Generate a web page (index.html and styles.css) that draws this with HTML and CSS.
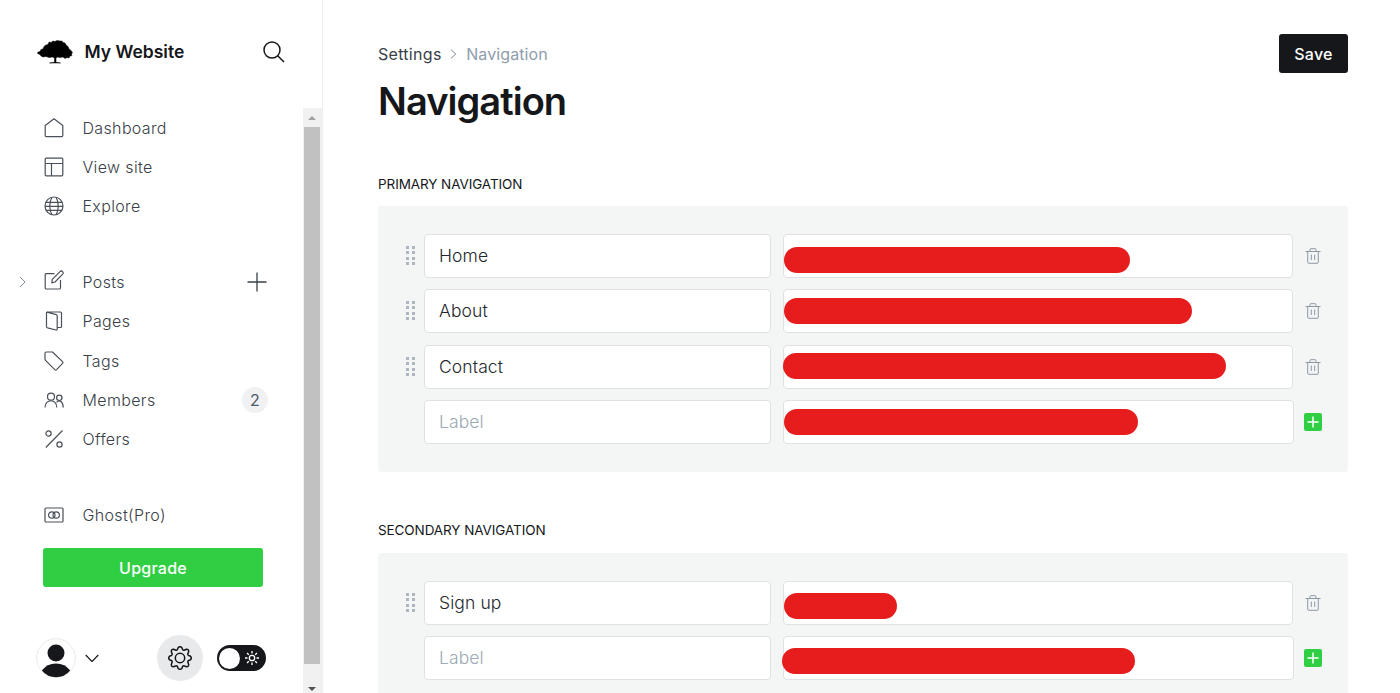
FILE: index.html
```html
<!DOCTYPE html>
<html lang="en">
<head>
    <meta charset="UTF-8">
    <meta name="viewport" content="width=device-width, initial-scale=1.0">
    <title>Settings - Navigation</title>
    <link rel="stylesheet" href="styles.css">
</head>
<body>
    <div class="app">
        <aside class="sidebar">
            <header class="sidebar-header">
                <svg class="logo" viewBox="0 0 36 26">
                    <path d="M0.500 14.500 L1 13 L3 12.500 L4 10.500 L6 10 L7 7.500 L9 6 L11 5.500 L12 3 L14 3.500 L16 2 L18 2.500 L20 1.500 L23 2 L25 2 L26 3.500 L28 4 L29 6 L31 7.500 L32 10 L34 11.500 L35.500 13.500 L34.500 15 L35 16.500 L33 17 L32 19 L30 18.500 L28 19.500 L26 18 L23 18.500 L20 18 L19 19.500 L19 23.300 L23.500 24 L12.500 24 L17.500 23.300 L17.500 19.500 L16 18 L12 18.500 L9 17.500 L6 18 L4 17 L3 15.500 Z"/>
                </svg>
                <span class="site-name">My Website</span>
                <svg class="search" viewBox="0 0 22 22">
                    <circle cx="9" cy="9" r="8"/>
                    <path d="M14.700 14.700 L21 21"/>
                </svg>
            </header>

            <div class="sidebar-body">
                <div class="sidebar-content">
                    <nav>
                        <ul class="menu">
                            <li>
                                <svg class="icon" viewBox="0 0 20 20"><path d="M1.200 7.500 L10 0.800 L18.800 7.500 V17.500 Q18.800 18.700 17.600 18.700 H2.400 Q1.200 18.700 1.200 17.500 Z"/></svg>
                                <span>Dashboard</span>
                            </li>
                            <li>
                                <svg class="icon" viewBox="0 0 20 20"><rect x="1.200" y="1.200" width="17.600" height="17.600" rx="1"/><path d="M1.200 6.500 H18.800 M7.500 6.500 V18.800"/></svg>
                                <span>View site</span>
                            </li>
                            <li>
                                <svg class="icon" viewBox="0 0 20 20"><circle cx="10" cy="10" r="9"/><path d="M1.700 6.300 H18.300 M1 10.300 H19 M2 14.300 H18 M8 1.200 C5 6 5 14 8 18.800 M12 1.200 C15 6 15 14 12 18.800"/></svg>
                                <span>Explore</span>
                            </li>
                        </ul>
                        <ul class="menu">
                            <li>
                                <svg class="expand" viewBox="0 0 7 12"><path d="M1 1 L6 6 L1 11"/></svg>
                                <svg class="icon icon-posts" viewBox="0 0 20 20"><path d="M10.500 3.700 H2.200 Q1.200 3.700 1.200 4.700 V18 Q1.200 19 2.200 19 H15.500 Q16.500 19 16.500 18 V10 M7.800 12.800 L8.300 9.400 L16 1.600 Q17.300 0.400 18.600 1.600 Q19.800 2.900 18.700 4.200 L11 12 Z"/></svg>
                                <span>Posts</span>
                                <svg class="plus" viewBox="0 0 20 20"><path d="M10 0.500 V19.500 M0.500 10 H19.500"/></svg>
                            </li>
                            <li>
                                <svg class="icon" viewBox="0 0 20 20"><path d="M3.200 1.200 L12.200 3.600 Q13.200 3.900 13.200 5 V18 Q13.200 19.300 12 19 L3.500 16.800 Q2.500 16.500 2.500 15.500 V2 Q2.500 1 3.500 1 H16.500 Q17.500 1 17.500 2 V15.500 Q17.500 16.500 16.500 16.500 H13.200"/></svg>
                                <span>Pages</span>
                            </li>
                            <li>
                                <svg class="icon" viewBox="0 0 20 20"><path d="M1 2.300 Q1 1 2.300 1 H8.500 L18.500 10.600 Q19.400 11.500 18.500 12.400 L12.600 18.600 Q11.700 19.500 10.800 18.600 L1.500 9.300 Q1 8.800 1 8 Z"/></svg>
                                <span>Tags</span>
                            </li>
                            <li>
                                <svg class="icon" viewBox="0 0 20 20"><circle cx="7" cy="6.700" r="3.500"/><circle cx="15.300" cy="7.800" r="2.700"/><path d="M1 17.500 C1 8.500 12.800 8.500 12.800 17.500 M12.500 12.300 C15 9.500 19.200 11.500 19.200 17.500"/></svg>
                                <span>Members</span>
                                <span class="count">2</span>
                            </li>
                            <li>
                                <svg class="icon" viewBox="0 0 20 20"><circle cx="4.500" cy="4.500" r="2.600"/><circle cx="15.500" cy="15.500" r="2.600"/><path d="M18.500 1.500 L1.800 18.500"/></svg>
                                <span>Offers</span>
                            </li>
                        </ul>
                        <ul class="menu">
                            <li>
                                <svg class="icon" viewBox="0 0 20 20"><rect x="1" y="3" width="18" height="14" rx="1"/><circle cx="7.800" cy="10" r="3.200"/><circle cx="12.200" cy="10" r="3.200"/></svg>
                                <span>Ghost(Pro)</span>
                            </li>
                        </ul>
                    </nav>
                    <button class="btn btn-upgrade">Upgrade</button>

                    <footer class="sidebar-footer">
                        <svg class="avatar" viewBox="0 0 40 40">
                            <circle class="avatar-ring" cx="20" cy="20" r="19.300"/>
                            <circle cx="20" cy="15" r="8.500"/>
                            <path d="M5.800 32.500 Q11 25.500 20 25.500 Q29 25.500 34.200 32.500 Q28.500 39.300 20 39.300 Q11.500 39.300 5.800 32.500 Z"/>
                        </svg>
                        <svg class="chevron" viewBox="0 0 14 9"><path d="M0.700 1 L7 7.500 L13.300 1"/></svg>
                        <span class="settings">
                            <svg viewBox="0 0 24 24">
                                <circle cx="12" cy="12" r="4.700"/>
                                <path d="M10.200 1.500 Q12 0 13.800 1.500 L14.500 3.300 Q15.200 4.600 16.600 4 L18.400 3.300 Q20.800 3.200 20.700 5.600 L20 7.400 Q19.400 8.800 20.700 9.500 L22.500 10.200 Q24 12 22.500 13.800 L20.700 14.500 Q19.400 15.200 20 16.600 L20.700 18.400 Q20.800 20.800 18.400 20.700 L16.600 20 Q15.200 19.400 14.500 20.700 L13.800 22.500 Q12 24 10.200 22.500 L9.500 20.700 Q8.800 19.400 7.400 20 L5.600 20.700 Q3.200 20.800 3.300 18.400 L4 16.600 Q4.600 15.200 3.300 14.500 L1.500 13.800 Q0 12 1.500 10.200 L3.300 9.500 Q4.600 8.800 4 7.400 L3.300 5.600 Q3.200 3.200 5.600 3.300 L7.400 4 Q8.800 4.600 9.500 3.300 Z"/>
                            </svg>
                        </span>
                        <span class="theme-toggle">
                            <span class="knob"></span>
                            <svg viewBox="0 0 16 16"><circle cx="8" cy="8" r="2.700"/><path d="M8 1 V3.500 M8 12.500 V15 M1 8 H3.500 M12.500 8 H15 M3 3 L4.800 4.800 M11.200 11.200 L13 13 M3 13 L4.800 11.200 M11.200 4.800 L13 3"/></svg>
                        </span>
                    </footer>
                </div>

                <div class="scrollbar">
                    <span class="arrow arrow-up"></span>
                    <span class="thumb"></span>
                    <span class="arrow arrow-down"></span>
                </div>
            </div>
        </aside>

        <main class="main">
            <header class="page-header">
                <div>
                    <div class="breadcrumb">
                        <span>Settings</span>
                        <svg viewBox="0 0 7 10"><path d="M1 0.800 L5.800 5 L1 9.200"/></svg>
                        <span class="current">Navigation</span>
                    </div>
                    <h1>Navigation</h1>
                </div>
                <button class="btn btn-save">Save</button>
            </header>

            <section>
                <h2>Primary navigation</h2>
                <div class="panel">
                    <div class="nav-row">
                        <span class="grip"></span>
                        <input type="text" value="Home">
                        <div class="url"><span class="mark mark-home"></span></div>
                        <svg class="trash" viewBox="0 0 16 16"><path d="M0.500 3.500 H15.500 M5 3.300 V1.500 Q5 0.700 5.800 0.700 H10.200 Q11 0.700 11 1.500 V3.300 M2.700 3.500 V14.300 Q2.700 15.300 3.700 15.300 H12.300 Q13.300 15.300 13.300 14.300 V3.500 M6.300 6.500 V12 M9.700 6.500 V12"/></svg>
                    </div>
                    <div class="nav-row">
                        <span class="grip"></span>
                        <input type="text" value="About">
                        <div class="url"><span class="mark mark-about"></span></div>
                        <svg class="trash" viewBox="0 0 16 16"><path d="M0.500 3.500 H15.500 M5 3.300 V1.500 Q5 0.700 5.800 0.700 H10.200 Q11 0.700 11 1.500 V3.300 M2.700 3.500 V14.300 Q2.700 15.300 3.700 15.300 H12.300 Q13.300 15.300 13.300 14.300 V3.500 M6.300 6.500 V12 M9.700 6.500 V12"/></svg>
                    </div>
                    <div class="nav-row">
                        <span class="grip"></span>
                        <input type="text" value="Contact">
                        <div class="url"><span class="mark mark-contact"></span></div>
                        <svg class="trash" viewBox="0 0 16 16"><path d="M0.500 3.500 H15.500 M5 3.300 V1.500 Q5 0.700 5.800 0.700 H10.200 Q11 0.700 11 1.500 V3.300 M2.700 3.500 V14.300 Q2.700 15.300 3.700 15.300 H12.300 Q13.300 15.300 13.300 14.300 V3.500 M6.300 6.500 V12 M9.700 6.500 V12"/></svg>
                    </div>
                    <div class="nav-row nav-row-new">
                        <span></span>
                        <input type="text" placeholder="Label">
                        <div class="url"><span class="mark mark-new"></span></div>
                        <svg class="add" viewBox="0 0 18 18"><path d="M9 3.500 V14.500 M3.500 9 H14.500"/></svg>
                    </div>
                </div>
            </section>

            <section>
                <h2>Secondary navigation</h2>
                <div class="panel">
                    <div class="nav-row">
                        <span class="grip"></span>
                        <input type="text" value="Sign up">
                        <div class="url"><span class="mark mark-signup"></span></div>
                        <svg class="trash" viewBox="0 0 16 16"><path d="M0.500 3.500 H15.500 M5 3.300 V1.500 Q5 0.700 5.800 0.700 H10.200 Q11 0.700 11 1.500 V3.300 M2.700 3.500 V14.300 Q2.700 15.300 3.700 15.300 H12.300 Q13.300 15.300 13.300 14.300 V3.500 M6.300 6.500 V12 M9.700 6.500 V12"/></svg>
                    </div>
                    <div class="nav-row nav-row-new">
                        <span></span>
                        <input type="text" placeholder="Label">
                        <div class="url"><span class="mark mark-new-secondary"></span></div>
                        <svg class="add" viewBox="0 0 18 18"><path d="M9 3.500 V14.500 M3.500 9 H14.500"/></svg>
                    </div>
                </div>
            </section>
        </main>
    </div>
</body>
</html>
```
FILE: styles.css
```css
* {
    box-sizing: border-box;
}

body {
    margin: 0;
    overflow: hidden;
    font-family: Inter, "Liberation Sans", sans-serif;
    color: #15171a;
    background: #fff;
}

svg {
    flex: none;
    fill: none;
    stroke: currentColor;
    stroke-linejoin: round;
}

.app {
    display: flex;
    height: 100vh;
}

/* Sidebar */

.sidebar {
    display: flex;
    flex-direction: column;
    flex: none;
    width: 323px;
    border-right: 1px solid #eceff0;
}

.sidebar-header {
    display: flex;
    align-items: center;
    flex: none;
    height: 108px;
    padding: 0 37.500px 5px 36.500px;
}

.logo {
    width: 36px;
    height: 26px;
    margin-top: 1px;
    fill: #000;
    stroke: #000;
    stroke-width: .5;
}

.site-name {
    margin-left: 12px;
    font-size: 17.500px;
    font-weight: 600;
}

.search {
    width: 22px;
    height: 22px;
    margin-top: 1px;
    margin-left: auto;
    stroke-width: 1.5;
}

.sidebar-body {
    display: flex;
    flex: 1;
    min-height: 0;
}

.sidebar-content {
    display: flex;
    flex-direction: column;
    flex: 1;
    padding: 0 36px 12px 18px;
}

.menu {
    list-style: none;
    margin: 0 0 36.700px;
    padding: 0;
}

.menu:last-child {
    margin-bottom: 13.300px;
}

.menu li {
    position: relative;
    display: flex;
    align-items: center;
    height: 39.250px;
    padding-left: 26px;
    font-size: 16px;
    font-weight: 300;
    letter-spacing: .35px;
    color: #394047;
}

.icon {
    width: 20px;
    height: 20px;
    margin-right: 18.500px;
    stroke-width: 1.2;
    color: #4a5059;
}

.icon-posts {
    margin-top: -4px;
}

.expand {
    position: absolute;
    left: 1px;
    width: 7px;
    height: 12px;
    color: #7c8b9a;
}

.plus {
    width: 20px;
    height: 20px;
    margin-left: auto;
    stroke-width: 1.3;
}

.count {
    width: 26px;
    margin-left: auto;
    margin-right: -1px;
    border-radius: 13px;
    background: #f0f1f3;
    line-height: 26px;
    text-align: center;
    font-weight: 400;
    letter-spacing: 0;
    color: #4f5863;
}

.btn {
    border: 0;
    border-radius: 3px;
    font-family: inherit;
    font-size: 16px;
    font-weight: 500;
    letter-spacing: .25px;
    color: #fff;
    cursor: pointer;
}

.btn-upgrade {
    flex: none;
    width: 220px;
    height: 39.500px;
    margin-left: 25px;
    background: #30cf43;
}

.sidebar-footer {
    display: flex;
    align-items: center;
    margin: auto 1px 0 18px;
}

.avatar {
    width: 40px;
    height: 40px;
    fill: #15171a;
    stroke: none;
}

.avatar-ring {
    fill: #fff;
    stroke: #e9ebec;
}

.chevron {
    width: 14px;
    height: 9px;
    margin-left: 9px;
    stroke-width: 1.1;
}

.settings {
    display: flex;
    align-items: center;
    justify-content: center;
    width: 46px;
    height: 46px;
    margin-left: auto;
    border-radius: 50%;
    background: #e8e9eb;
}

.settings svg {
    width: 24px;
    height: 24px;
    stroke-width: 1.5;
}

.theme-toggle {
    display: flex;
    align-items: center;
    justify-content: space-between;
    width: 49px;
    height: 26px;
    margin-left: 14px;
    padding: 0 6px 0 2px;
    border-radius: 13px;
    background: #15171a;
    color: #fff;
}

.knob {
    width: 21px;
    height: 21px;
    border-radius: 50%;
    background: #fff;
}

.theme-toggle svg {
    width: 16px;
    height: 16px;
    stroke-width: 1.3;
}

.scrollbar {
    display: flex;
    flex-direction: column;
    align-items: center;
    width: 19px;
    padding-right: 1px;
    background: #f1f1f1;
}

.arrow {
    flex: none;
    border: 4.500px solid transparent;
}

.arrow-up {
    height: 12px;
    margin-bottom: 7px;
    border-top-width: 8px;
    border-bottom: 4px solid #a0a0a0;
}

.thumb {
    width: 16px;
    height: 537px;
    background: #c1c1c1;
}

.arrow-down {
    margin-top: 23px;
    border-top: 4px solid #505050;
    border-bottom: 0;
}

/* Page */

.main {
    flex: 1;
    padding: 34px 52px 0 55px;
}

.page-header {
    display: flex;
    align-items: flex-start;
    justify-content: space-between;
}

.breadcrumb {
    display: flex;
    align-items: center;
    height: 39px;
    font-size: 16px;
    letter-spacing: .3px;
    color: #394047;
}

.breadcrumb svg {
    width: 7px;
    height: 10px;
    margin: 0 9px 0 8.500px;
    color: #7c8b9a;
}

.breadcrumb .current {
    letter-spacing: .1px;
    color: #8e9cac;
}

h1 {
    margin: 4px 0 0;
    font-size: 38px;
    font-weight: 600;
    line-height: 48px;
    letter-spacing: -.95px;
}

.btn-save {
    width: 69px;
    height: 39px;
    padding: 0;
    background: #15171a;
}

h2 {
    margin: 48.500px 0 12.500px;
    font-size: 13.500px;
    font-weight: 400;
    line-height: 20px;
    letter-spacing: -.09px;
    text-transform: uppercase;
}

.panel {
    padding: 28px 26px 27.500px;
    border-radius: 3px;
    background: #f4f6f6;
}

.nav-row {
    display: grid;
    grid-template-columns: 8px 347px 510px 16px;
    column-gap: 12px;
    align-items: center;
    height: 44px;
    margin-bottom: 11.400px;
}

.nav-row:last-child {
    margin-bottom: 0;
}

/* Two columns of four dots */
.grip {
    width: 9px;
    height: 20px;
    margin-left: 1.500px;
    background-image: linear-gradient(#f4f6f6, #f4f6f6), repeating-linear-gradient(#aeb7c1 0 3px, #f4f6f6 3px 5.300px);
    background-position: center;
    background-repeat: no-repeat;
    background-size: 3px 20px, 9px 20px;
}

.nav-row input,
.url {
    width: 100%;
    height: 44px;
    border: 1px solid #dfe2e3;
    border-radius: 4px;
    background: #fff;
}

.nav-row input {
    padding: 0 14px 1px;
    font-family: inherit;
    font-size: 17.500px;
    font-weight: 300;
    letter-spacing: .1px;
    color: #24282d;
}

.nav-row input::placeholder {
    color: #9ba9b4;
}

.url {
    position: relative;
}

.nav-row-new .url {
    width: 511px;
}

/* Marker strokes lie over the address fields */
.mark {
    position: absolute;
    left: 0;
    height: 26px;
    border-radius: 13px;
    background: #e71d1d;
}

.mark-home {
    top: 12px;
    width: 346px;
}

.mark-about {
    top: 8px;
    width: 408px;
}

.mark-contact {
    top: 7.500px;
    left: -1px;
    width: 443px;
}

.mark-new {
    top: 7.500px;
    width: 354px;
}

.mark-signup {
    top: 11.500px;
    width: 113px;
}

.mark-new-secondary {
    top: 10.500px;
    left: -2px;
    width: 353px;
}

.trash {
    width: 16px;
    height: 16px;
    color: #8c98a5;
}

.add {
    width: 18px;
    height: 18px;
    margin-left: -1px;
    border-radius: 2px;
    background: #30cf43;
    color: #fff;
    stroke-width: 1.5;
}
```
